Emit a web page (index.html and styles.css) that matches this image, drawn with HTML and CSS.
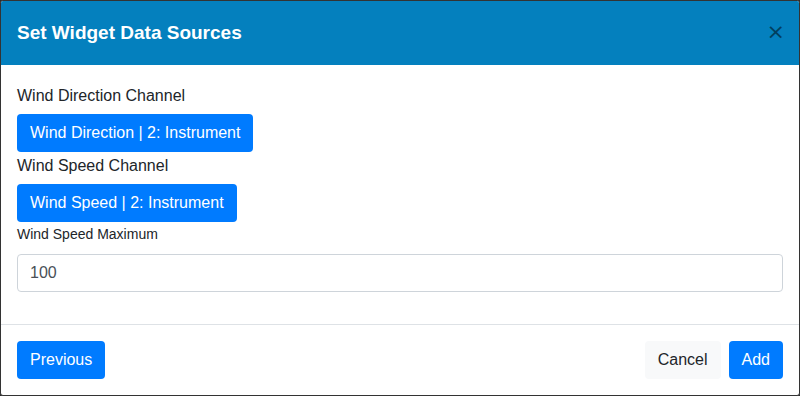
FILE: index.html
```html
<!DOCTYPE html>
<html lang="en">
<head>
    <meta charset="UTF-8">
    <meta name="viewport" content="width=device-width, initial-scale=1.0">
    <title>Set Widget Data Sources</title>
    <link rel="stylesheet" href="styles.css">
</head>
<body>

    <div class="modal">
        <div class="modal-header">
            <h5 class="modal-title">Set Widget Data Sources</h5>
            <button class="close" type="button">&times;</button>
        </div>

        <div class="modal-body">
            <label class="channel-label">Wind Direction Channel</label>
            <div><button class="btn btn-primary">Wind Direction | 2: Instrument</button></div>

            <label class="channel-label">Wind Speed Channel</label>
            <div><button class="btn btn-primary">Wind Speed | 2: Instrument</button></div>

            <div class="form-group">
                <label class="small-label" for="speedMax">Wind Speed Maximum</label>
                <input type="text" id="speedMax" class="form-control" value="100">
            </div>
        </div>

        <div class="modal-footer">
            <button class="btn btn-primary">Previous</button>
            <div class="spacer"></div>
            <button class="btn btn-light">Cancel</button>
            <button class="btn btn-primary">Add</button>
        </div>
    </div>

</body>
</html>
```

FILE: styles.css
```css
body {
    margin: 0;
    background: #2b2b2b;
    font-family: "Liberation Sans", Arial, sans-serif;
    font-size: 16px;
    line-height: 1.5;
    color: #212529;
}
.modal {
    width: 800px;
    height: 396px;
    box-sizing: border-box;
    background: #fff;
    border: 1px solid #333;
    border-radius: 3px;
    overflow: hidden;
}
.modal-header {
    background: #0480be;
    color: #fff;
    height: 64px;
    box-sizing: border-box;
    padding: 16px;
    display: flex;
    align-items: center;
    justify-content: space-between;
}
.modal-title {
    margin: 0;
    font-size: 19px;
    font-weight: bold;
    line-height: 30px;
}
.close {
    background: none;
    border: none;
    padding: 0;
    margin: 0 -2px 2px 0;
    font-family: "DejaVu Sans", sans-serif;
    font-size: 22px;
    line-height: 1;
    color: #000;
    opacity: 0.5;
    cursor: pointer;
}
.modal-body {
    padding: 17px 16px 16px;
}
.channel-label {
    display: block;
    padding-top: 2px;
    margin-bottom: 6px;
    line-height: 24px;
}
.small-label {
    display: block;
    font-size: 14px;
    line-height: 21px;
    margin: 2px 0 9px;
}
.form-group {
    margin-bottom: 16px;
}
.btn {
    font-family: inherit;
    font-size: 16px;
    line-height: 24px;
    padding: 6px 12px;
    border: 1px solid transparent;
    border-radius: 4px;
    cursor: pointer;
}
.btn-primary {
    background: #007bff;
    color: #fff;
}
.btn-light {
    background: #f8f9fa;
    color: #212529;
}
.form-control {
    display: block;
    width: 100%;
    box-sizing: border-box;
    height: 38px;
    padding: 6px 12px;
    font-family: inherit;
    font-size: 16px;
    color: #495057;
    border: 1px solid #ced4da;
    border-radius: 4px;
}
.modal-footer {
    border-top: 1px solid #dee2e6;
    padding: 16px 16px 15px;
    display: flex;
    align-items: center;
    gap: 8px;
}
.spacer {
    flex: 1;
}
```
